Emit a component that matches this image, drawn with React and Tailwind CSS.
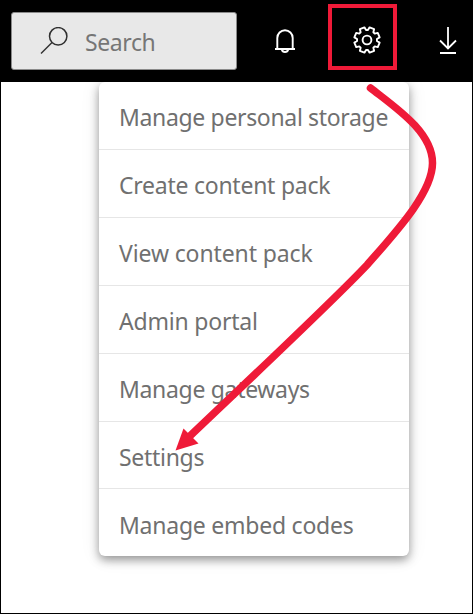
const items = [
  { label: "Manage personal storage", style: "h-[68px] pt-[3px] tracking-[-0.34px]" },
  { label: "Create content pack", style: "h-[68px] pt-[3px] tracking-[-0.25px]" },
  { label: "View content pack", style: "h-[68px] pt-[3px] tracking-[-0.12px]" },
  { label: "Admin portal", style: "h-[68px] pt-[3px] tracking-[-0.2px]" },
  { label: "Manage gateways", style: "h-[68px] pt-[3px] tracking-[-0.32px]" },
  { label: "Settings", style: "h-[67px] pt-[3px] tracking-[-0.3px]" },
  { label: "Manage embed codes", style: "h-[67px] pt-[5px] tracking-[-0.24px]" },
];

// Outline of an eight-toothed gear centred on (14, 14).
function gearPoints() {
  const points = [];
  const add = (r, deg) => {
    const a = (deg * Math.PI) / 180;
    points.push(`${(14 + r * Math.cos(a)).toFixed(2)},${(14 + r * Math.sin(a)).toFixed(2)}`);
  };
  for (let i = 0; i < 8; i++) {
    const mid = 22.5 + i * 45;
    add(10, mid - 17);
    add(12.9, mid - 11);
    add(12.9, mid + 11);
    add(10, mid + 17);
  }
  return points.join(" ");
}

function SearchIcon() {
  return (
    <svg className="h-7 w-7 shrink-0" viewBox="0 0 28 28" fill="none" stroke="#303030" strokeWidth="1.5">
      <circle cx="18.2" cy="9.3" r="8.7" />
      <path d="M12 15.5L1 26.5" />
    </svg>
  );
}

function Header() {
  return (
    <header className="flex h-[82px] shrink-0 items-start bg-black pl-[10px]">
      <div className="mt-3 flex h-[58px] w-[226px] items-center rounded-[3px] border border-[#8a8a8a] bg-[#e8e8e8] pl-7">
        <SearchIcon />
        <span className="ml-[17px] mt-[2px] text-[23px] leading-8 tracking-[-0.4px] text-[#767676]">Search</span>
      </div>
      <svg className="ml-9 mt-7 h-7 w-6" viewBox="0 0 24 28" fill="none" stroke="white" strokeWidth="1.9">
        <path d="M4.3 21V9.9a7.7 7.7 0 0 1 15.4 0V21M2 21h20M8.8 21.5a3.3 3.3 0 0 0 6.4 0" />
      </svg>
      <div className="ml-[31px] mt-1 flex h-[66px] w-[69px] items-center justify-center border-4 border-[#ef1a38] pl-[9px] pt-[6px]">
        <svg className="h-7 w-7" viewBox="0 0 28 28" fill="none" stroke="white" strokeWidth="1.9" strokeLinejoin="round">
          <polygon points={gearPoints()} />
          <circle cx="14" cy="14" r="4.4" />
        </svg>
      </div>
      <svg className="ml-[41px] mt-[27px] h-7 w-5" viewBox="0 0 20 28" fill="none" stroke="white" strokeWidth="1.8">
        <path d="M10 0v21M2 13.5l8 8 8-8M2 26h16" />
      </svg>
    </header>
  );
}

export default function App() {
  return (
    <div className="relative flex h-[614px] w-[473px] flex-col overflow-hidden border border-t-0 border-black bg-white font-['Noto_Sans','Open_Sans',sans-serif]">
      <div className="relative z-10"><Header /></div>
      <nav className="ml-[98px] flex h-[474px] w-[310px] flex-col rounded-[6px] bg-white shadow-[0_4px_10px_rgba(0,0,0,0.38),0_1px_20px_rgba(0,0,0,0.09)]">
        {items.map((item, i) => (
          <a key={item.label} className={`flex shrink-0 items-center whitespace-nowrap pl-5 text-[23px] leading-8 text-[#707070] ${item.style} ${i < 6 ? "border-b border-[#e6e6e6]" : ""}`}>
            <span>{item.label}</span>
          </a>
        ))}
      </nav>
      <svg className="pointer-events-none absolute -left-px top-0 z-20 h-[614px] w-[473px]" viewBox="0 0 473 614" fill="none">
        <path d="M370.5 88C396 108 432.5 132 432.5 163C432.5 193 395 233 367 265C335 299 271 359 190 436" stroke="#ef1a38" strokeWidth="7.5" strokeLinecap="round" />
        <path d="M175.5 450.5L183.5 428.5L198.5 443.5Z" fill="#ef1a38" />
      </svg>
    </div>
  );
}
